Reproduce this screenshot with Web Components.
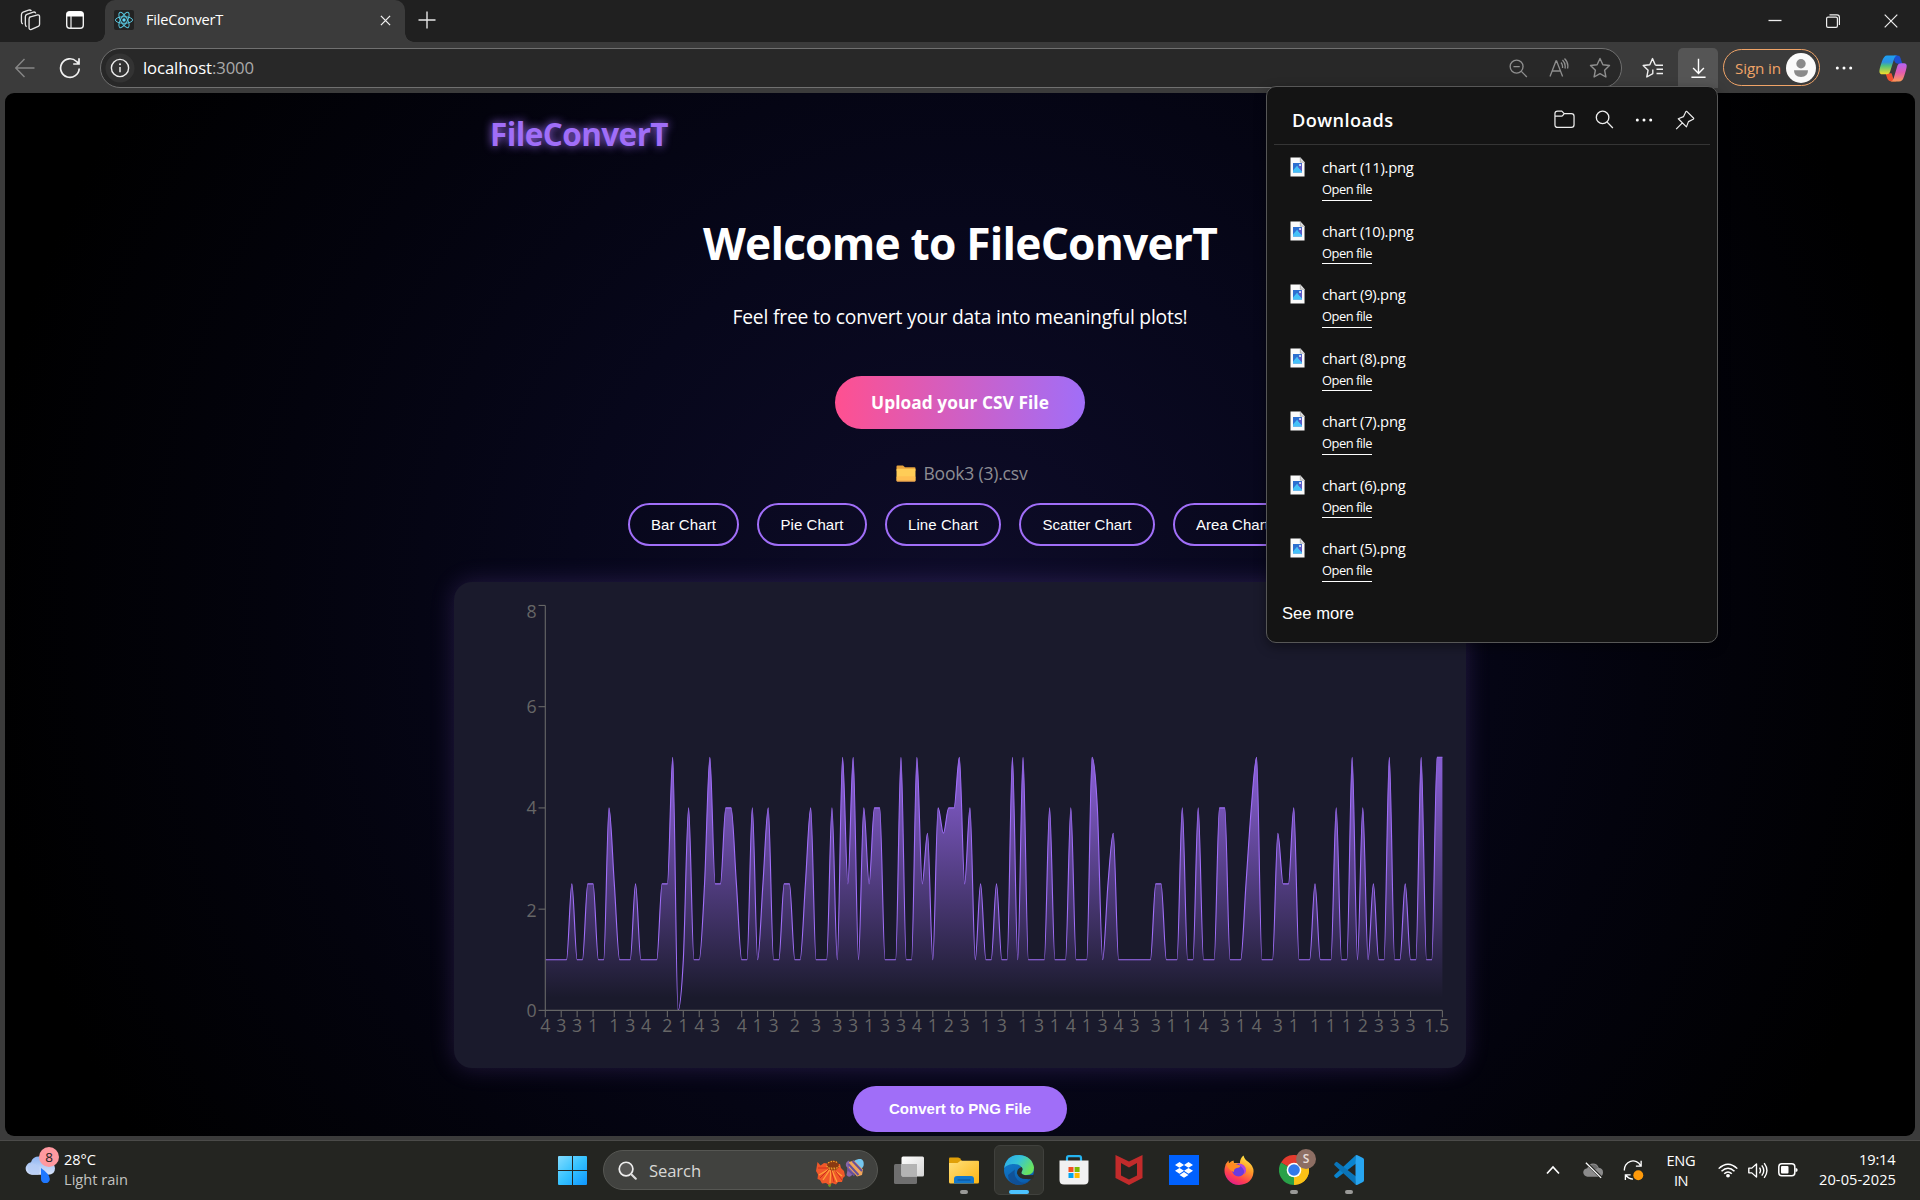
<!DOCTYPE html>
<html lang="en">
<head>
<meta charset="utf-8">
<title>FileConverT</title>
<style>
html,body{margin:0;height:1200px;overflow:hidden;background:#242521}
body{font-family:"Open Sans","Noto Sans",sans-serif}
</style>
</head>
<body>
<desk-top></desk-top>
<script>
const ICONS = {
workspaces:['0 0 22 24','<g fill="none" stroke="#e6e6e6" stroke-width="1.4" stroke-linejoin="round"><path d="M10 8.5 18.5 6.2Q20.5 5.8 20.5 8V16q0 1.6-1.4 2.2L12 21.3Q9.500 22 9.500 19.500V10.500Q9.500 9 11 8.300Z"/><path d="M7 18.500Q5.600 18 5.600 16V8Q5.600 6.200 7.200 5.600L14 3.200Q16 2.700 16.500 4.500"/><path d="M3 15.500Q1.500 15 1.500 13V6Q1.500 4 3.200 3.300L9 1.200Q11 .7 12 2"/></g>'],
vtabs:['0 0 20 20','<rect x="1.700" y="1.700" width="16.600" height="16.600" rx="3" fill="none" stroke="#f0f0f0" stroke-width="1.400"/><path d="M1.500 5a3.500 3.500 0 0 1 3.500-3.500h10A3.500 3.500 0 0 1 18.500 5v1.500h-17z" fill="#fff"/><path d="M6 6v12" stroke="#f0f0f0" stroke-width="1.200"/>'],
react:['0 0 20 20','<rect width="20" height="20" rx="2" fill="#222"/><g fill="none" stroke="#58c4dc" stroke-width="1"><ellipse cx="10" cy="10" rx="8.600" ry="3.300"/><ellipse cx="10" cy="10" rx="8.600" ry="3.300" transform="rotate(60 10 10)"/><ellipse cx="10" cy="10" rx="8.600" ry="3.300" transform="rotate(120 10 10)"/></g><circle cx="10" cy="10" r="1.700" fill="#61dafb"/>'],
close:['0 0 12 12','<path d="m1 1 10 10M11 1 1 11" stroke="#f2f2f2" stroke-width="1.400"/>'],
winclose:['0 0 14 14','<path d="m.7.700 12.600 12.600M13.300.7.700 13.300" stroke="#eee" stroke-width="1.200"/>'],
plus:['0 0 18 18','<path d="M9 .5v17M.5 9h17" stroke="#e6e6e6" stroke-width="1.400"/>'],
min:['0 0 14 14','<path d="M.5 6.500h13" stroke="#eee" stroke-width="1.300"/>'],
restore:['0 0 14 14','<path d="M.6 4.500q0-1.400 1.400-1.400h8q1.400 0 1.400 1.400v7.500q0 1.400-1.400 1.400H2Q.6 13.400.600 12zM3.500.8h7.500q2.400 0 2.400 2.400V11" fill="none" stroke="#eee" stroke-width="1.200"/>'],
back:['0 0 20 20','<path d="M19.500 10H1M9.500 1 .8 10l8.700 9" fill="none" stroke="#868686" stroke-width="1.400"/>'],
refresh:['0 0 22 22','<path d="M20.200 11.500A9.300 9.300 0 1 1 17.500 4.500l2.500 2.300M20 1.200v5.800h-5.800" fill="none" stroke="#f2f2f2" stroke-width="1.700"/>'],
info:['0 0 30 30','<circle cx="15" cy="15" r="14.500" fill="#333"/><circle cx="15" cy="15" r="8.600" fill="none" stroke="#eee" stroke-width="1.400"/><path d="M15 14v5.200" stroke="#eee" stroke-width="1.500"/><circle cx="15" cy="11.200" r="1" fill="#eee"/>'],
zoomout:['0 0 20 20','<g fill="none" stroke="#8f8f8f" stroke-width="1.400"><circle cx="8" cy="8" r="6.800"/><path d="m13 13 5.800 6M4.700 8h6.600"/></g>'],
aloud:['0 0 20 20','<g fill="none" stroke="#8f8f8f" stroke-width="1.300"><path d="M1 18.500 7 3h.6l6 15.500M3.300 13h8M12 4.500q2 2.300 1.500 5.500M13.500 2q3.500 3.500 2.500 8.500M15.500.5Q20 5 18.500 10.500"/></g>'],
star:['0 0 22 22','<path d="m11 1.500 2.900 6.200 6.600.8-4.900 4.700 1.300 6.800L11 16.700 5.100 20l1.300-6.800L1.500 8.500l6.600-.8z" fill="none" stroke="#8f8f8f" stroke-width="1.400" stroke-linejoin="round"/>'],
favs:['0 0 22 22','<path d="M13.300 8.200H21M14.500 12.300H21M14.500 16.500H21" stroke="#eee" stroke-width="1.400"/><path d="M13.300 8 10.500 1.600 7.800 7.700l-6.600.8 4.900 4.700L4.800 20l6-3.400V12.500" fill="none" stroke="#eee" stroke-width="1.400" stroke-linejoin="round"/>'],
dl:['0 0 18 22','<path d="M9 .8v15M3.300 10.500 9 16.300l5.700-5.800M1.500 20.200h15" fill="none" stroke="#fff" stroke-width="1.500"/>'],
avatar:['0 0 30 30','<circle cx="15" cy="15" r="15" fill="#fafafa"/><circle cx="15" cy="10.700" r="4.700" fill="#8a8a8a"/><path d="M8 17.300h14q0 6.700-7 6.700T8 17.300z" fill="#8a8a8a"/>'],
dots:['0 0 18 6','<g fill="#fff"><circle cx="2.300" cy="3" r="1.500"/><circle cx="9" cy="3" r="1.500"/><circle cx="15.700" cy="3" r="1.500"/></g>'],
copilot:['0 0 28 28','<defs><linearGradient id="a" x1="0" y1="0" x2="0" y2="1"><stop offset="0" stop-color="#1aa1f4"/><stop offset=".35" stop-color="#2f8fe0"/><stop offset=".55" stop-color="#4fc27b"/><stop offset="1" stop-color="#f5dd2a"/></linearGradient><linearGradient id="b" x1="0" y1="0" x2="0" y2="1"><stop offset="0" stop-color="#b264f5"/><stop offset=".5" stop-color="#e35bb0"/><stop offset="1" stop-color="#fb9a58"/></linearGradient></defs><path d="M15 .5h3.500q2.200 0 3 2.500l1.800 6h-4q-3 0-4-3z" fill="#1c4fd0"/><path d="M6.500 19h6l2 6q.5 2 3 2.500h-5q-3 0-4-2.500z" fill="#f0512f"/><path d="M8 .5h10q-2 .5-2.800 3L11 17.500Q10.300 20 7.500 20H3.500Q.3 20 .4 16.500.5 14 3 6.500 5 .5 8 .5z" fill="url(#a)"/><path d="M20 27.500H11.500q2.200-.5 3-3L18.500 11q.8-2.500 3.500-2.500h3q2.800 0 2.700 3-.1 3-2.600 10.500-1.500 5.500-5.100 5.500z" fill="url(#b)"/>'],
folder:['0 0 22 20','<path d="M1 4q0-2.800 2.800-2.800h4.400l2.500 2.600h7.500Q21 3.800 21 6.600V15.500q0 2.800-2.800 2.800H3.800Q1 18.300 1 15.500zM1 6.500h6.800q1 0 1.500-.9L10.700 3.800" fill="none" stroke="#eee" stroke-width="1.300" stroke-linejoin="round"/>'],
search:['0 0 20 20','<g fill="none" stroke="#eee" stroke-width="1.400"><circle cx="8" cy="7.800" r="6.600"/><path d="m12.800 12.800 6 6.200"/></g>'],
pin:['0 0 22 22','<path d="M13.200 1.700 20.300 8.800Q21 9.600 20 10.200L14.800 12.800 12.600 18.600 3.600 9.600 9.300 7.300 11.900 2Q12.400 1 13.200 1.700zM8.100 14.100 1.300 21" fill="none" stroke="#eee" stroke-width="1.300" stroke-linejoin="round"/>'],
png:['0 0 16 20','<path d="M.5.5h10.500l4.500 4.700V19.500H.5z" fill="#fafafa"/><path d="M11 .5v4.700h4.500" fill="#ddd" stroke="#999" stroke-width=".7"/><rect x="3.200" y="6" width="9.600" height="9.500" fill="#2d6fd0"/><path d="M3.200 15.500v-2l4.300-4.700 5.300 5.500v1.200z" fill="#45c1f7"/><path d="m8.500 10 4.300-4v8.200z" fill="#5a5cc8"/><circle cx="10.700" cy="8" r="1" fill="#fff"/>'],
emfolder:['0 0 20 18','<path d="M.5 1.500Q.5.500 1.500.500h5.500L9 2.500H18.500q1 0 1 1V6H.5z" fill="#e8a33d"/><rect x=".5" y="4" width="19" height="13.500" rx="1" fill="#ffcd57"/><rect x=".5" y="12" width="19" height="5.500" rx="1" fill="#ffb84f" opacity=".7"/><path d="M1 17.200h18" stroke="#b97448" stroke-width=".7"/>'],
weather:['0 0 30 28','<defs><linearGradient id="a" x1="0" y1="0" x2="0" y2="1"><stop offset="0" stop-color="#8db4f2"/><stop offset="1" stop-color="#d9e4fa"/></linearGradient></defs><path d="M7 19.500a6.500 6.500 0 0 1-1-12.900Q7.500.5 14 .5q6 0 8 5.500 7.700.5 8 6.800 0 6.700-7 6.700z" fill="url(#a)"/><path d="M7 19.500A6.500 6.500 0 0 1 7 7.500q5 .5 7 5t-1 7z" fill="#b5ccf5" opacity=".8"/><path d="M16 12.500q8.800 6.500 8.800 11.300a4.400 4.400 0 0 1-8.800 0z" fill="#1f78ff"/>'],
win:['0 0 29 29','<defs><linearGradient id="a" gradientUnits="userSpaceOnUse" x1="0" y1="0" x2="29" y2="29"><stop offset="0" stop-color="#83dcff"/><stop offset=".5" stop-color="#35c2ff"/><stop offset="1" stop-color="#0e96ff"/></linearGradient></defs><path d="M0 1q0-1 1-1h13v14H0zM15 0h13q1 0 1 1v13H15zM0 15h14v14H1q-1 0-1-1zM15 15h14v13q0 1-1 1H15z" fill="url(#a)"/>'],
tsearch:['0 0 20 20','<circle cx="8.500" cy="8.500" r="7.200" fill="#77777766" stroke="#eee" stroke-width="1.800"/><path d="m13.700 13.700 5 5" stroke="#ddd" stroke-width="2.200" stroke-linecap="round"/>'],
flower:['0 0 48 28','<path d="M13 20q2 5 0 7.500" stroke="#6a9a20" stroke-width="2.500" fill="none"/><path d="m1.500 3 3 3.500L8 4l6 1 10 0 1 4 3 3 1 5-2 2-1 4-4 0-2 2.500-4-1.500-3 2-3-2-4 .5-2-3.500L1.500 20 2 15.500 0 12z" fill="#f0582a"/><path d="M15 9 3 16M15 9 7 21M15 9l-1 15M15 9l6 14M15 9l11 8" stroke="#ffa23a" stroke-width="1.300"/><path d="M14 9 2 9M13 10 4 19M15 10l3 13M18 10l8 11" stroke="#c9281a" stroke-width=".9"/><ellipse cx="17" cy="6.500" rx="6" ry="5" fill="#8a3a12"/><path d="M10.500 7q6 6 13 0M12 4q5-3 9-.5M12 9h10" fill="none" stroke="#f0a02a" stroke-width="1.200" stroke-dasharray="1.500 1.200"/><path d="M37 3q3-3.500 8-3 3.500 1.500 2.500 7L45 11z" fill="#75c7ef"/><path d="M33 1.500q-4 1.500-3 5.500 2 1.500 1.500 4l-1 5q2 3 4.500 1l3-3z" fill="#8866a8"/><path d="m33 3 5-1.500 9 9-1 5.500-5 1.500-8-9z" fill="#f2a65a"/><path d="m36.500 2 9.500 10M32.500 5l10 11M31.500 10l7 6.500" stroke="#66509a" stroke-width="2"/>'],
taskview:['0 0 30 28','<defs><linearGradient id="a" x1="0" y1="0" x2="1" y2="1"><stop offset="0" stop-color="#fff"/><stop offset="1" stop-color="#d5d5d5"/></linearGradient></defs><rect x="0" y="8" width="23" height="20" rx="1.500" fill="#6f6f6f"/><rect x="7.500" y=".5" width="22.500" height="20" rx="1.500" fill="url(#a)"/><path d="M7.500 8H23v12.500H9q-1.500 0-1.500-1.500z" fill="#b4b4b4"/>'],
explorer:['0 0 30 27','<defs><linearGradient id="a" x1="0" y1="0" x2="1" y2="1"><stop offset="0" stop-color="#ffe07a"/><stop offset="1" stop-color="#fcb514"/></linearGradient></defs><path d="M0 1.500Q0 .5 1 .5h8q1 0 1.800.8L13 4v5H0z" fill="#e0a008"/><path d="M0 6h8.500l3-2.200H29q1 0 1 1V25q0 1.500-1.500 1.500h-27Q0 26.500 0 25z" fill="url(#a)"/><path d="M5 26.500V22q0-3 3-3h14q3 0 3 3v4.500z" fill="#1277cc"/><path d="M9 23h12" stroke="#084f94" stroke-width="1.200" stroke-linecap="round"/>'],
edge:['0 0 30 30','<defs><linearGradient id="a" x1="0" y1="0" x2="1" y2=".5"><stop offset="0" stop-color="#2aa5ec"/><stop offset=".5" stop-color="#36c4d8"/><stop offset="1" stop-color="#6ae35d"/></linearGradient><linearGradient id="b" x1="0" y1="0" x2=".4" y2="1"><stop offset="0" stop-color="#1482cf"/><stop offset="1" stop-color="#0a5fb0"/></linearGradient></defs><circle cx="15" cy="15" r="15" fill="url(#b)"/><path d="M11 14.500q-2 8 5 12.200 6 3 11.800-3.200Q23 30 15 30 4 29 4 20z" fill="#124a8c" opacity=".75"/><path d="M.2 13Q2 0 15.500 0 28 1 30 12.500 30 20 22.500 20q-6.500 0-5-3.500 2-3-.7-5.300Q13.500 8.500 8.500 9 2.500 9.800.2 13z" fill="url(#a)"/><path d="M17.500 12q2 2 .3 4.500-1.500 3.200 3.500 3.700l9.700-.2-2.200 3.500q-3 1-6 .5-7.500.5-9.800-5.500-.2-5 4.500-6.500z" fill="#2c2d2a"/>'],
store:['0 0 30 30','<path d="M8 7V3q0-1.800 1.800-1.800h10.400Q22 1.200 22 3v4" fill="none" stroke="#25b4f0" stroke-width="2.200"/><path d="M.5 5.500h29V25q0 4.500-4.500 4.500H5Q.5 29.500.5 25z" fill="#f1f1f1"/><path d="M9.500 12h5v5h-5z" fill="#f25022"/><path d="M15.600 12h5v5h-5z" fill="#7fba00"/><path d="M9.500 18h5v5h-5z" fill="#00a4ef"/><path d="M15.600 18h5v5h-5z" fill="#ffb900"/>'],
mcafee:['0 0 30 30','<path fill-rule="evenodd" d="M1.500 0 15 6.500 28.500 0v23L15 30 1.500 23zM7 8v12.500l8 4 8-4V8l-8 4.500z" fill="#c22b2b"/>'],
dropbox:['0 0 30 30','<rect width="30" height="30" fill="#0061fe"/><path d="m10.500 7 4.500 2.900-4.500 2.900L6 9.900zm9 0L24 9.900l-4.500 2.900L15 9.900zm-9 5.900 4.500 2.900-4.500 2.900L6 15.800zm9 0 4.500 2.900-4.500 2.900-4.500-2.900zM15 17l4.500 2.900L15 22.800l-4.500-2.900z" fill="#fff"/>'],
firefox:['0 0 30 30','<defs><linearGradient id="a" x1=".8" y1="0" x2=".3" y2="1"><stop offset="0" stop-color="#fff04a"/><stop offset=".4" stop-color="#ff9a28"/><stop offset=".75" stop-color="#ff3f50"/><stop offset="1" stop-color="#e01c8c"/></linearGradient></defs><path d="M15 30A14.500 14.500 0 0 1 .7 13Q1.500 8 4.500 5.500L5 8.500q2-2.500 4.500-3l.5 2.500h6Q16 3 19.500.5q1 4 5 6.500 5.500 4.500 5 10Q28.500 29 15 30z" fill="url(#a)"/><circle cx="14.500" cy="15" r="6.500" fill="#6a3be0"/><path d="M2.500 9q5-3 9 0l5 1.500q0 2-4 2.500-3 1-2.500 4Q4 15 2.500 9z" fill="#ff8a22"/><path d="M14 8.500q8 0 8 7.500-.5 2-2 3.500 1-5-3-8z" fill="#b144e0"/>'],
chrome:['0 0 30 30','<path d="M15 15 2 7.500A15 15 0 0 1 28 7.500z" fill="#e33b2e"/><path d="M15 15 28 7.500A15 15 0 0 1 15 30z" fill="#fbc116"/><path d="M15 15v15A15 15 0 0 1 2 7.500z" fill="#29a148"/><path d="M15 8h13.200q1.800 3.500 1.800 7 0 9-8 13l-7 2 6.500-11z" fill="#fbc116"/><circle cx="15" cy="15" r="7.300" fill="#fff"/><circle cx="15" cy="15" r="5.800" fill="#3279ea"/>'],
vscode:['0 0 30 30','<path d="M22 8.500 3.500 22.800Q2.500 23.500 1.700 22.700L.5 21.500Q-.2 20.600.6 19.800L21.500.6z" fill="#0a84ce"/><path d="M22 21.500 3.500 7.200Q2.500 6.500 1.700 7.300L.5 8.500Q-.2 9.400.6 10.200L21.500 29.400z" fill="#0a74b8"/><path d="M21.500.5Q22.300-.3 23.500.3L29 3q1 .5 1 1.800V25.200q0 1.300-1 1.800l-5.500 2.700q-1.200.6-2-.2z" fill="#27a5f0"/>'],
chev:['0 0 14 10','<path d="m1 8.500 6-6.500 6 6.500" fill="none" stroke="#fff" stroke-width="1.700"/>'],
cloud:['0 0 22 18','<path d="M5 15.500a4.500 4.500 0 0 1-.5-9Q6 1.500 10.500 1.500t6 4.500Q21 6.500 21 11q0 4.500-4.500 4.500z" fill="#8b8b8b"/><path d="M7 5q4-5 9 1l-5 3z" fill="#6d6d6d"/><path d="m3.500.8 15.800 16" stroke="#242521" stroke-width="3"/><path d="m3 .8 16 16" stroke="#fff" stroke-width="1.300"/>'],
sync:['0 0 22 22','<g fill="none" stroke="#fff" stroke-width="1.400"><path d="M1.500 11A9 9 0 0 1 18.500 6M19 .8v5.700h-5.500M10.500 20Q6 20 3 16M2.500 21v-5.500H8"/></g><circle cx="16" cy="16" r="5.200" fill="#ff9a0a"/>'],
wifi:['0 0 20 16','<g fill="none" stroke="#fff" stroke-width="1.500"><path d="M.7 6Q10-3.500 19.300 6M3.500 8.800q6.500-6.500 13 0M6.200 11.500q3.800-3.800 7.600 0"/></g><circle cx="10" cy="13.600" r="1.900" fill="#fff"/>'],
speaker:['0 0 20 18','<g fill="none" stroke="#fff" stroke-width="1.400" stroke-linejoin="round"><path d="M.8 6.500h3L8.500 2v14L3.800 11.500h-3zM11.500 6q2 3 0 6M13.800 3.500q4 5.500 0 11M16.200 1.200q5.500 7.800 0 15.600"/></g>'],
battery:['0 0 20 14','<rect x=".8" y=".8" width="16" height="12" rx="3" fill="none" stroke="#fff" stroke-width="1.500"/><rect x="3" y="3" width="7.500" height="7.600" rx="1" fill="#fff"/><path d="M17.500 5q2.200 0 2.200 2t-2.200 2z" fill="#fff"/>']
};

const fitted = new Set();

function define(tag, render) {
  customElements.define(tag, class extends HTMLElement {
    connectedCallback() {
      if (this.shadowRoot) return;
      this.attachShadow({mode: 'open'}).innerHTML = render(this);
    }
  });
}

/* Inline SVG icon: name, w, h */
define('ui-icon', el => {
  const [box, body] = ICONS[el.getAttribute('name')];
  const w = el.getAttribute('w'), h = el.getAttribute('h') || w;
  return `<style>:host{display:block;flex:none;width:${w}px;height:${h}px}svg{display:block}</style>
  <svg width="${w}" height="${h}" viewBox="${box}" preserveAspectRatio="none">${body}</svg>`;
});

/* Fixed-width flex cell that centres its content */
define('ui-cell', el => `<style>:host{display:flex;flex:none;align-items:center;justify-content:center;width:${el.getAttribute('w')}px}</style><slot></slot>`);

/* One line of text, tracked so that it spans w pixels */
customElements.define('ui-text', class extends HTMLElement {
  connectedCallback() {
    if (this.shadowRoot) return;
    this.attachShadow({mode: 'open'}).innerHTML =
      `<style>:host{display:block;flex:none;white-space:nowrap;width:${this.getAttribute('w')}px}span{display:inline-block}</style><span><slot></slot></span>`;
    fitted.add(this);
  }
  fit() {
    const span = this.shadowRoot.querySelector('span');
    const target = +this.getAttribute('w');
    const n = this.textContent.length;
    span.style.letterSpacing = ((target - span.getBoundingClientRect().width) / n) + 'px';
  }
});

define('tab-strip', () => `<style>
:host{display:flex;height:42px;background:#202020;color:#fff;font-size:14.600px}
.tab{display:flex;align-items:center;width:300px;height:42px;background:#3b3b3b;border-radius:10px 10px 0 0;position:relative}
.tab::before,.tab::after{content:"";position:absolute;bottom:0;width:9px;height:9px}
.tab::before{left:-9px;background:radial-gradient(circle at 0 0,#202020 8.500px,#3b3b3b 9px)}
.tab::after{right:-9px;background:radial-gradient(circle at 100% 0,#202020 8.500px,#3b3b3b 9px)}
.lead{display:flex;width:105px;align-items:center;padding-bottom:2px;box-sizing:border-box}
.tab ui-text{margin:-4px 0 0 12px;line-height:24px}
.tab ui-icon:first-child{margin:-2px 0 0 9px}
.sp{flex:1}
</style>
<div class="lead"><ui-cell w="61"><ui-icon name="workspaces" w="21" h="23"></ui-icon></ui-cell><ui-cell w="28"><ui-icon name="vtabs" w="20"></ui-icon></ui-cell></div>
<div class="tab"><ui-icon name="react" w="20"></ui-icon><ui-text w="77">FileConverT</ui-text><span class="sp"></span><ui-icon name="close" w="11" style="margin-right:14px;margin-top:-1px"></ui-icon></div>
<ui-cell w="44" style="padding-bottom:3px"><ui-icon name="plus" w="18"></ui-icon></ui-cell><span class="sp"></span>
<ui-cell w="58"><ui-icon name="min" w="14"></ui-icon></ui-cell><ui-cell w="58"><ui-icon name="restore" w="14"></ui-icon></ui-cell><ui-cell w="58"><ui-icon name="winclose" w="14"></ui-icon></ui-cell>`);

define('address-bar', () => `<style>
:host{display:flex;align-items:flex-start;height:51px;padding-top:6px;box-sizing:border-box;background:#3b3b3b}
.url{display:flex;align-items:center;box-sizing:border-box;width:1522px;height:40px;border:1px solid #707070;border-radius:20px;background:#282828;padding-left:4px;font-size:16.700px;line-height:26px;color:#fff}
ui-cell{height:40px}.port{color:#aaa}.sp{flex:1}
.dl{background:#555;border-radius:5px 5px 0 0}
.signin{display:flex;align-items:center;box-sizing:border-box;width:97px;height:37px;margin:1px 0 0 5px;border:1.500px solid #f0a468;border-radius:19px;color:#f0a468;font-size:15.200px;padding:0 3px 0 11px;justify-content:space-between}
</style>
<ui-cell w="50"><ui-icon name="back" w="20"></ui-icon></ui-cell><ui-cell w="40"><ui-icon name="refresh" w="22"></ui-icon></ui-cell><ui-cell w="10"></ui-cell>
<div class="url"><ui-icon name="info" w="30"></ui-icon><ui-text w="111" style="margin-left:8px;margin-top:-1px">localhost<span class="port">:3000</span></ui-text><span class="sp"></span>
<ui-cell w="40"><ui-icon name="zoomout" w="19"></ui-icon></ui-cell><ui-cell w="41"><ui-icon name="aloud" w="20"></ui-icon></ui-cell><ui-cell w="41"><ui-icon name="star" w="22"></ui-icon></ui-cell><ui-cell w="1"></ui-cell></div>
<ui-cell w="56" style="padding-left:3px;box-sizing:content-box"><ui-icon name="favs" w="22"></ui-icon></ui-cell>
<ui-cell class="dl" w="40" style="margin-left:-3px"><ui-icon name="dl" w="17" h="21"></ui-icon></ui-cell>
<div class="signin"><ui-text w="46">Sign in</ui-text><ui-icon name="avatar" w="30"></ui-icon></div>
<ui-cell w="48"><ui-icon name="dots" w="18" h="6"></ui-icon></ui-cell><ui-cell w="50"><ui-icon name="copilot" w="28" h="27"></ui-icon></ui-cell>`);

define('download-item', el => `<style>
:host{display:flex;height:63.500px;color:#fff}
.t{margin:-1px 0 0 17px}
.n{font-size:14.800px;line-height:22px}
.o{font-size:12.900px;line-height:18px;margin-top:2px;height:19.500px;border-bottom:1px solid #fff}
</style><ui-icon name="png" w="15" h="20"></ui-icon>
<div class="t"><ui-text class="n" w="${el.getAttribute('w')}">${el.getAttribute('file')}</ui-text><ui-text class="o" w="50">Open file</ui-text></div>`);

define('downloads-panel', () => `<style>
:host{display:block;position:absolute;left:1266px;top:86px;width:452px;height:557px;box-sizing:border-box;border:1px solid #575757;border-radius:10px;background:#141414;color:#fff;z-index:5;box-shadow:0 4px 12px #0006}
header{display:flex;align-items:center;margin:0 7px;padding:8px 0 0 18px;box-sizing:border-box;border-bottom:1px solid #353535;font-size:18.200px;font-weight:600;height:58px}
.sp{flex:1}
.list{padding:12px 0 0 23px}
.more{font:16.600px/24px "Liberation Sans",Arial,sans-serif;margin:0 0 0 15px}
</style>
<header><ui-text w="101.500">Downloads</ui-text><span class="sp"></span><ui-cell w="40"><ui-icon name="folder" w="21" h="19"></ui-icon></ui-cell><ui-cell w="40"><ui-icon name="search" w="19"></ui-icon></ui-cell><ui-cell w="40"><ui-icon name="dots" w="18" h="6"></ui-icon></ui-cell><ui-cell w="42"><ui-icon name="pin" w="20"></ui-icon></ui-cell><ui-cell w="4"></ui-cell></header>
<div class="list">${[11,10,9,8,7,6,5].map(n => `<download-item w="${n > 9 ? 91.5 : 83.5}" file="chart (${n}).png"></download-item>`).join('')}</div>
<ui-text class="more" w="72">See more</ui-text>`);

/* Area chart with monotone-X interpolation */
const VALUES = [1,1,1,1,1,2.5,1,1,2.5,2.5,1,1,4,2.5,1,1,1,2.5,1,1,1,1,2.5,2.5,5,0,1,4,1,1,2.5,5,2.5,2.5,4,4,2.5,1,1,4,1,2.5,4,1,1,2.5,2.5,1,1,2.5,4,1,1,1,4,1,5,2.5,5,1,4,2.5,4,4,1,1,1,5,1,1,5,2.5,3.5,1,4,3.5,4,4,5,
2.5,4,1,2.5,1,1,2.5,1,1,5,1,5,1,1,1,1,4,1,1,1,4,1,1,1,5,4,1,2.5,3.5,1,1,1,1,1,1,1,2.5,2.5,1,1,1,4,1,1,4,1,1,1,4,4,1,1,1,2.5,4,5,1,1,1,3.5,2.5,2.5,4,1,1,1,2.5,1,1,1,4,1,1,5,1,4,1,2.5,1,1,5,1,1,2.5,1,1,5,1,1,5,5];
const TICKS = '0:4 3:3 6:3 9:1 13:1 16:3 19:4 23:2 26:1 29:4 32:3 37:4 40:1 43:3 47:2 51:3 55:3 58:3 61:1 64:3 67:3 70:4 73:1 76:2 79:3 83:1 86:3 90:1 93:3 96:1 99:4 102:1 105:3 108:4 111:3 115:3 118:1 121:1 124:4 128:3 131:1 134:4 138:3 141:1 145:1 148:1 151:1 154:2 157:3 160:3 163:3 169:1.5';
define('area-chart', () => {
  const X0 = 91.300, Y0 = 428.400, STEP = 897.100 / 169, U = 50.620;
  const x = i => X0 + i * STEP, y = v => Y0 - v * U;
  const n = VALUES.length, s = [], m = [];
  for (let i = 0; i < n - 1; i++) s.push(-(VALUES[i + 1] - VALUES[i]) * U / STEP);
  for (let i = 1; i < n - 1; i++) {
    const p = (s[i - 1] + s[i]) / 2;
    m[i] = (Math.sign(s[i - 1]) + Math.sign(s[i])) * Math.min(Math.abs(s[i - 1]), Math.abs(s[i]), 0.5 * Math.abs(p)) || 0;
  }
  m[0] = (3 * s[0] - m[1]) / 2; m[n - 1] = (3 * s[n - 2] - m[n - 2]) / 2;
  const f = v => v.toFixed(2), d = STEP / 3;
  let line = `M${f(x(0))},${f(y(VALUES[0]))}`;
  for (let i = 1; i < n; i++) line += `C${f(x(i-1)+d)},${f(y(VALUES[i-1])+m[i-1]*d)},${f(x(i)-d)},${f(y(VALUES[i])-m[i]*d)},${f(x(i))},${f(y(VALUES[i]))}`;
  const ys = [[0,435],[2,334.5],[4,232.3],[6,131.2],[8,35.7]];
  return `<style>:host{display:block}svg{display:block}text{font:17.700px "Open Sans","Noto Sans",sans-serif;fill:#666}</style>
  <svg width="1012" height="486"><defs><linearGradient id="g" x1="0" y1="0" x2="0" y2="1"><stop offset=".05" stop-color="#a06ef8" stop-opacity=".8"/><stop offset=".95" stop-color="#a06ef8" stop-opacity="0"/></linearGradient></defs>
  <path d="${line}V${Y0}H${X0}Z" fill="url(#g)"/><path d="${line}" fill="none" stroke="#a06ef8" stroke-width="1.125"/>
  <g fill="none" stroke="#666" stroke-width="1.125"><path d="M${X0} ${y(8)}V${Y0}H${f(x(169))}"/>${ys.map(([v]) => `<path d="M${X0-6.800} ${f(y(v))}H${X0}"/>`).join('')}
  ${TICKS.split(' ').map(t => `<path d="M${f(x(+t.split(':')[0]))} ${Y0}v6.800"/>`).join('')}</g>
  ${ys.map(([v, b]) => `<text x="82.500" y="${b}" text-anchor="end">${v}</text>`).join('')}
  ${TICKS.split(' ').map(t => { const [i, l] = t.split(':'); return `<text x="${f(l === '1.5' ? 982.600 : x(+i))}" y="450" text-anchor="middle">${l}</text>`; }).join('')}</svg>`;
});

define('chart-button', el => `<style>:host{display:flex;align-items:center;justify-content:center;box-sizing:border-box;height:43px;width:${el.getAttribute('w')}px;border:2px solid #a06ef8;border-radius:22px;color:#fff;font:15px "Liberation Sans",Arial,sans-serif}</style><ui-text w="${el.getAttribute('tw')}"><slot></slot>${el.getAttribute('label')}</ui-text>`);

define('convert-page', () => `<style>
:host{display:flex;flex-direction:column;align-items:center;height:1043px;width:1910px;margin:0 5px;border-radius:9px;overflow:hidden;box-sizing:border-box;padding-top:19px;color:#fff;background:radial-gradient(circle 980px at 955px 520px,#0e0c29 0,#07071b 40%,#03030d 70%,#000 100%)}
.logo{font-size:31.500px;font-weight:700;line-height:44px;color:#a06ef8;text-shadow:0 0 10px #a06ef8;align-self:flex-start;margin-left:485px}
.h1{font-size:44.300px;font-weight:700;line-height:60px;margin-top:57px}
.p{font-size:19.300px;line-height:26px;margin-top:31px}
.up{display:flex;align-items:center;justify-content:center;width:250px;height:53px;margin-top:46px;border-radius:27px;background:linear-gradient(90deg,#ff5090,#a06ef8);font-size:17.300px;font-weight:700;flex:none}
.file{display:flex;align-items:center;gap:8px;height:28px;margin:30px 0 16px 3px;font-size:17.500px;color:#8d8d93;line-height:28px}
.row{display:flex;gap:18px}
.card{width:1012px;height:486px;margin-top:36px;border-radius:18px;background:#1a1a2c;box-shadow:0 0 24px #a06ef833;flex:none}
.conv{display:flex;align-items:center;justify-content:center;flex:none;width:214px;height:46px;margin-top:18px;border-radius:23px;background:#a06ef8;font:bold 15px "Liberation Sans",Arial,sans-serif}
.conv ui-text{margin-top:-2px}
</style>
<ui-text class="logo" w="178">FileConverT</ui-text>
<ui-text class="h1" w="514">Welcome to FileConverT</ui-text>
<ui-text class="p" w="455">Feel free to convert your data into meaningful plots!</ui-text>
<div class="up"><ui-text w="178">Upload your CSV File</ui-text></div>
<div class="file"><ui-icon name="emfolder" w="20" h="17"></ui-icon><ui-text w="104">Book3 (3).csv</ui-text></div>
<div class="row"><chart-button w="111" tw="65" label="Bar Chart"></chart-button><chart-button w="110" tw="63" label="Pie Chart"></chart-button><chart-button w="116" tw="70" label="Line Chart"></chart-button><chart-button w="136" tw="89" label="Scatter Chart"></chart-button><chart-button w="119" tw="73" label="Area Chart"></chart-button></div>
<div class="card"><area-chart></area-chart></div>
<div class="conv"><ui-text w="142">Convert to PNG File</ui-text></div>`);

define('task-app', el => `<style>
:host{display:flex;position:relative;flex:none;align-items:center;justify-content:center;width:50px;height:50px;box-sizing:border-box;border-radius:6px;margin-right:5px;border:1px solid ${el.hasAttribute('active') ? '#40413d' : 'transparent'};background:${el.hasAttribute('active') ? '#33342f' : 'none'}}
i{position:absolute;bottom:0;left:50%;height:4px;border-radius:2px;transform:translateX(-50%);background:${el.hasAttribute('active') ? '#4cc2ff' : '#9a9a98'};width:${el.hasAttribute('active') ? 20 : 8}px}
b{position:absolute;left:26px;top:3px;width:20px;height:20px;border-radius:50%;background:#8d6e63;color:#e8dcd8;font-size:12px;line-height:20px;text-align:center;font-weight:600}
</style><ui-icon name="${el.getAttribute('name')}" w="${el.getAttribute('w') || 30}" h="${el.getAttribute('h') || 30}"></ui-icon>
${el.hasAttribute('open') ? '<i></i>' : ''}${el.hasAttribute('badge') ? `<b>${el.getAttribute('badge')}</b>` : ''}`);

define('task-bar', () => `<style>
:host{display:flex;height:60px;box-sizing:border-box;border-top:1px solid #4b4b49;background:#242521;color:#fff;font-size:14.600px;line-height:20px}
.weather{display:flex;width:547px;padding:8px 0 0 25px;box-sizing:border-box}
.wi{position:relative;width:30px;padding-top:7px}
.wi b{position:absolute;left:14px;top:-2px;width:20px;height:20px;border-radius:50%;background:#ff99a0;color:#222;font-weight:400;font-size:13.500px;line-height:20px;text-align:center}
.wt{margin-left:9px}.wt ui-text+ui-text{color:#c2c2c0}
.mid{display:flex;padding-top:4px;width:993px}
.search{display:flex;align-items:center;box-sizing:border-box;width:275px;height:40px;margin:5px 6px 0 1px;border:1px solid #565753;border-radius:20px;background:#41423f;padding:0 13px 0 14px;color:#d8d8d6;font-size:16.600px}
.search .sp{flex:1}
.tray{display:flex;align-items:flex-start;flex:1}
.tray ui-cell{height:58px}
.lang{width:54px;padding-top:9px;text-align:center}.lang ui-text{margin:auto}
.clock{padding:8px 0 0 16px;width:77px}.clock ui-text:first-child{margin-left:40px}
</style>
<div class="weather"><div class="wi"><ui-icon name="weather" w="30" h="27"></ui-icon><b>8</b></div><div class="wt"><ui-text w="32">28°C</ui-text><ui-text w="64">Light rain</ui-text></div></div>
<div class="mid"><task-app name="win" w="29" h="29"></task-app>
<div class="search"><ui-icon name="tsearch" w="19"></ui-icon><ui-text w="52" style="margin:1px 0 0 12px">Search</ui-text><span class="sp"></span><ui-icon name="flower" w="48" h="28" style="margin-top:5px"></ui-icon></div>
<task-app name="taskview" h="28"></task-app><task-app name="explorer" h="27" open></task-app><task-app name="edge" active open></task-app><task-app name="store"></task-app><task-app name="mcafee"></task-app><task-app name="dropbox"></task-app><task-app name="firefox"></task-app><task-app name="chrome" open badge="S"></task-app><task-app name="vscode" open></task-app></div>
<div class="tray"><ui-cell w="26"><ui-icon name="chev" w="14" h="10"></ui-icon></ui-cell><ui-cell w="54"><ui-icon name="cloud" w="21" h="17"></ui-icon></ui-cell><ui-cell w="26"><ui-icon name="sync" w="21"></ui-icon></ui-cell><ui-cell w="8"></ui-cell>
<div class="lang"><ui-text w="29">ENG</ui-text><ui-text w="14">IN</ui-text></div><ui-cell w="5"></ui-cell>
<ui-cell w="30"><ui-icon name="wifi" w="20" h="15"></ui-icon></ui-cell><ui-cell w="30"><ui-icon name="speaker" w="20" h="17"></ui-icon></ui-cell><ui-cell w="30"><ui-icon name="battery" w="20" h="14"></ui-icon></ui-cell>
<div class="clock"><ui-text w="36.500">19:14</ui-text><ui-text w="77">20-05-2025</ui-text></div></div>`);

define('desk-top', () => `<style>
:host{display:flex;flex-direction:column;width:1920px;height:1200px;position:relative;overflow:hidden;background:#3b3b3b}
convert-page{flex:none}task-bar{margin-top:4px}
</style><tab-strip></tab-strip><address-bar></address-bar><convert-page></convert-page><task-bar></task-bar><downloads-panel></downloads-panel>`);

fitted.forEach(t => t.fit());
</script>
</body>
</html>
